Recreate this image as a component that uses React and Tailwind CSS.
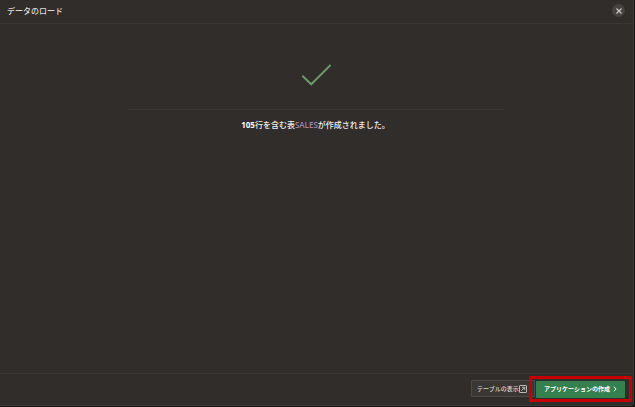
import React from 'react';

function CloseIcon() {
  return (
    <svg viewBox="0 0 8 8" className="size-2" fill="none" stroke="#cfccc8" strokeWidth="1.1" aria-hidden="true">
      <path d="M1.5 1.5 6.5 6.5M6.5 1.5 1.5 6.5" />
    </svg>
  );
}

function ExternalIcon() {
  return (
    <svg viewBox="0 0 8 8" className="size-2 shrink-0" fill="none" stroke="#c9c6c2" strokeWidth="0.9" aria-hidden="true">
      <rect x="0.5" y="0.5" width="7" height="7" rx="0.5" />
      <path d="M2.3 5.8 5.6 2.5M3 2.3H5.7V5" />
    </svg>
  );
}

function ChevronIcon() {
  return (
    <svg viewBox="0 0 4 6" className="h-1.5 w-1 shrink-0" fill="none" stroke="#f2f7f3" strokeWidth="1" aria-hidden="true">
      <path d="M0.8 0.7 3.1 3 0.8 5.3" />
    </svg>
  );
}

export default function App() {
  return (
    <div className="flex min-h-screen flex-col bg-[#151413] pr-px pb-px font-['Open_Sans','Noto_Sans_CJK_JP',sans-serif]">
      <div
        role="dialog"
        aria-labelledby="dialog-title"
        className="flex grow flex-col rounded-br border-r border-b border-[#3c3936] bg-[#312d2a]"
      >
        <header className="flex h-6 items-center justify-between border-b border-[#3b3734] pr-2 pb-0.5 pl-[7px]">
          <h1 id="dialog-title" className="text-[8px] leading-3 font-medium text-[#dedbd8]">データのロード</h1>
          <button
            type="button"
            aria-label="閉じる"
            className="flex size-[13px] items-center justify-center rounded-full bg-[#474340]"
          >
            <CloseIcon />
          </button>
        </header>

        <main className="flex grow flex-col items-center pt-10 pr-0.5">
          <svg viewBox="0 0 30 22" className="h-[22px] w-[30px]" fill="none" stroke="#6b9a66" strokeWidth="2" aria-hidden="true">
            <path d="M1.3 11.7 10.2 20.3 29.6 0.9" />
          </svg>
          <hr className="mt-[23px] w-full max-w-[376px] border-[#3b3734]" />
          <p className="mt-2 text-[8px] leading-[14px] font-medium text-[#f1efed]">
            <strong className="font-bold text-white">105</strong>行を含む表
            <span className="font-semibold text-[#a084ab]">SALES</span>が作成されました。
          </p>
        </main>

        <footer className="flex h-8 items-center justify-end border-t border-[#3b3734] pb-0.5">
          <button
            type="button"
            className="flex h-[17px] w-16 items-center rounded-[1px] border border-[#4d4946] bg-[#3b3734] pl-[5px] text-[6px] leading-3 font-medium whitespace-nowrap text-[#d8d5d2]"
          >
            テーブルの表示
            <ExternalIcon />
          </button>
          <div className="-ml-1.5 mr-px border-3 border-[#c50000] pt-0.5 pr-1 pb-px pl-1">
            <button
              type="button"
              className="flex h-[17px] w-[89px] items-center justify-center gap-[3px] rounded-[1px] bg-[#35804f] text-[6px] leading-3 font-bold whitespace-nowrap text-white"
            >
              アプリケーションの作成
              <ChevronIcon />
            </button>
          </div>
        </footer>
      </div>
    </div>
  );
}
